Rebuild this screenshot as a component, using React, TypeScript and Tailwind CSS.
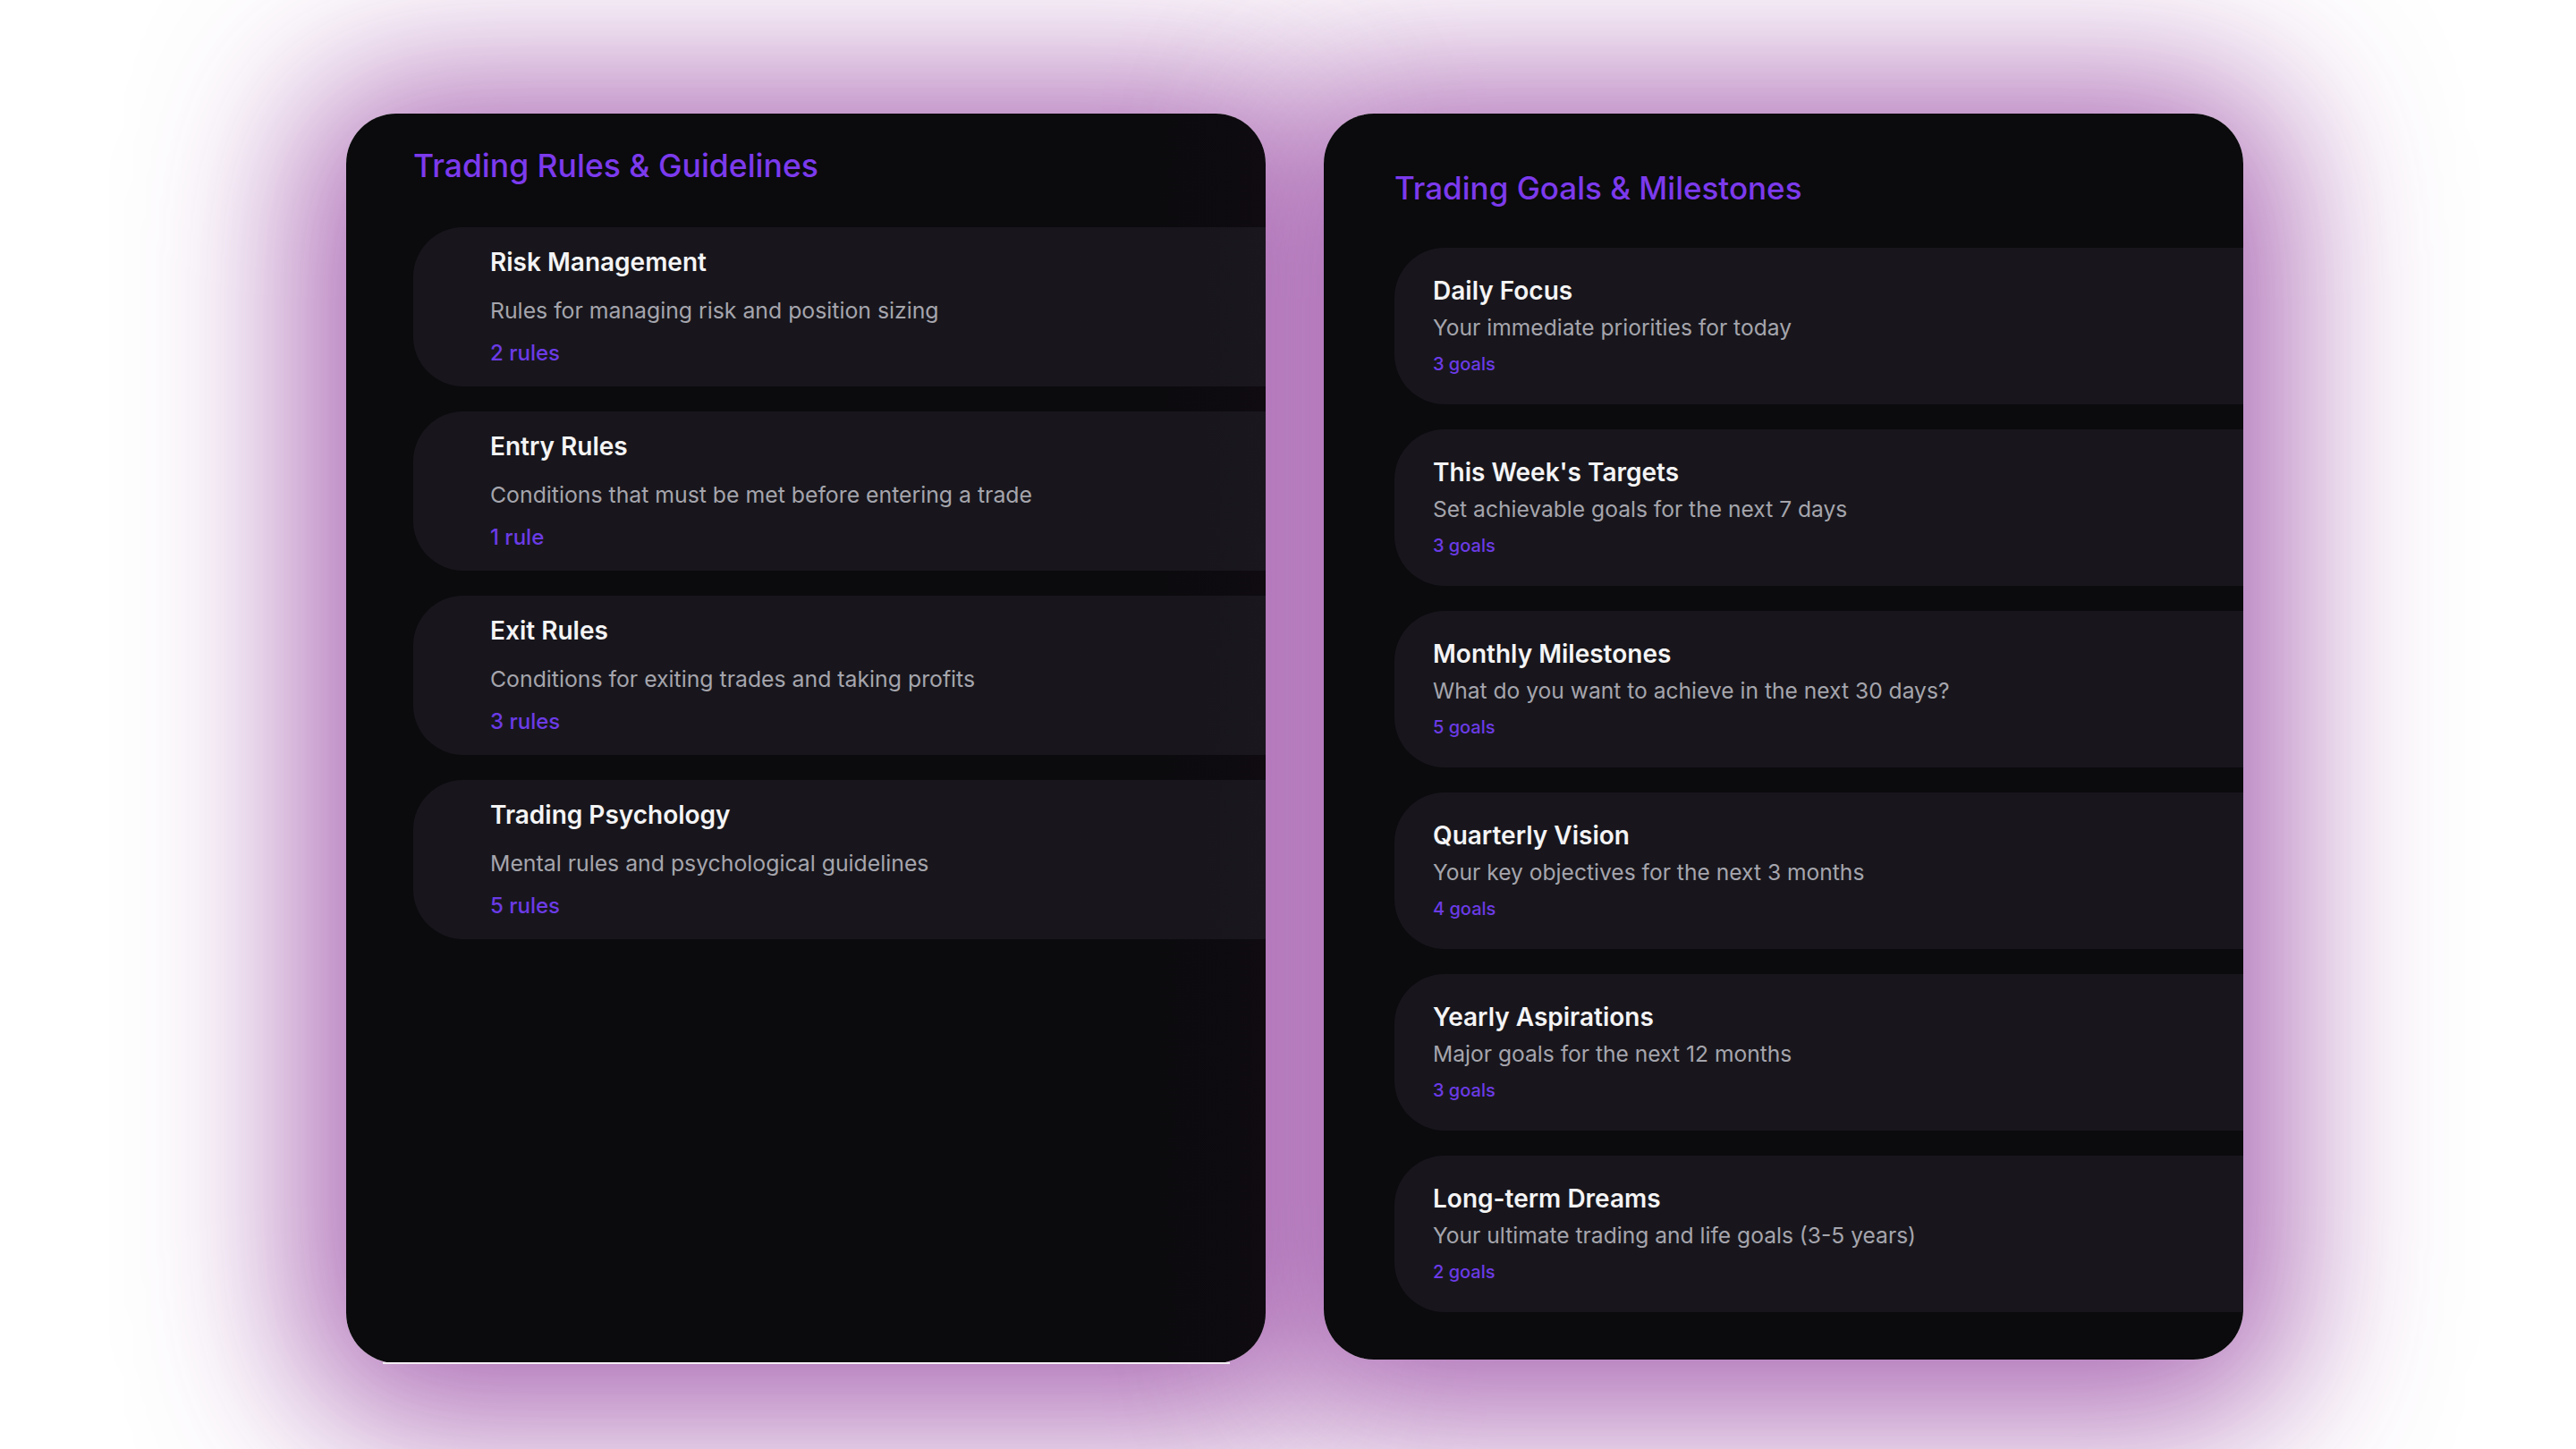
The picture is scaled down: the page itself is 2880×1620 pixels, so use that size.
import React from 'react';

type Group = { title: string; desc: string; count: string };

const RULES: Group[] = [
  { title: 'Risk Management', desc: 'Rules for managing risk and position sizing', count: '2 rules' },
  { title: 'Entry Rules', desc: 'Conditions that must be met before entering a trade', count: '1 rule' },
  { title: 'Exit Rules', desc: 'Conditions for exiting trades and taking profits', count: '3 rules' },
  { title: 'Trading Psychology', desc: 'Mental rules and psychological guidelines', count: '5 rules' },
];

const GOALS: Group[] = [
  { title: 'Daily Focus', desc: 'Your immediate priorities for today', count: '3 goals' },
  { title: "This Week's Targets", desc: 'Set achievable goals for the next 7 days', count: '3 goals' },
  { title: 'Monthly Milestones', desc: 'What do you want to achieve in the next 30 days?', count: '5 goals' },
  { title: 'Quarterly Vision', desc: 'Your key objectives for the next 3 months', count: '4 goals' },
  { title: 'Yearly Aspirations', desc: 'Major goals for the next 12 months', count: '3 goals' },
  { title: 'Long-term Dreams', desc: 'Your ultimate trading and life goals (3-5 years)', count: '2 goals' },
];

// glow sits on the wrapper so both panels paint above either halo
const GLOW = 'rounded-[56px] shadow-[0_16px_180px_50px_rgba(160,85,170,0.9)]';

const App: React.FC = () => {
  return (
    <div
      className="min-h-screen w-full bg-white overflow-hidden"
      style={{ fontFamily: 'Inter, "Noto Sans", sans-serif' }}
    >
      <div className="flex items-start gap-[65px] pl-[387px] pt-[127px]">
        {/* Rules panel */}
        <div className="flex flex-col items-center">
          <div className={GLOW}>
            <section className="relative z-10 w-[1028px] h-[1397px] rounded-[56px] overflow-hidden bg-linear-to-r from-[#0b0a0d] from-88% to-[#0f0b11] pl-[75px] pt-[37px]">
              <h2 className="text-[35.5px] leading-[44px] font-medium text-[#7c3aed]">Trading Rules &amp; Guidelines</h2>
              <div className="mt-[46px] flex flex-col gap-[28px]">
                {RULES.map((r) => (
                  <div
                    key={r.title}
                    className="w-[1040px] h-[178px] shrink-0 rounded-[56px] bg-linear-to-r from-[#18161c] from-85% to-[#1c1722] pl-[86px] pt-[21px]"
                  >
                    <h3 className="text-[28px] leading-[36px] font-semibold text-[#f4f4f5]">{r.title}</h3>
                    <p className="mt-[20px] text-[24.8px] leading-[32px] text-[#a5a5ad]">{r.desc}</p>
                    <p className="mt-[16px] text-[24px] leading-[32px] font-medium text-[#6b3be6]">{r.count}</p>
                  </div>
                ))}
              </div>
            </section>
          </div>
          <div className="relative z-10 -mt-[1px] h-[2px] w-[947px] bg-[#f3ecf3]" />
        </div>

        {/* Goals panel */}
        <div className={GLOW}>
          <section className="relative z-10 w-[1028px] h-[1393px] rounded-[56px] overflow-hidden bg-[#0b0a0d] pl-[79px] pt-[61px]">
            <h2 className="text-[35px] leading-[44px] font-medium text-[#7c3aed]">Trading Goals &amp; Milestones</h2>
            <div className="mt-[45px] flex flex-col gap-[28px]">
              {GOALS.map((g) => (
                <div
                  key={g.title}
                  className="w-[1040px] h-[175px] shrink-0 rounded-[56px] bg-[#18161c] pl-[43px] pt-[30px]"
                >
                  <h3 className="text-[28px] leading-[36px] font-semibold text-[#f4f4f5]">{g.title}</h3>
                  <p className="mt-[7px] text-[24.6px] leading-[32px] text-[#a5a5ad]">{g.desc}</p>
                  <p className="mt-[11px] text-[20px] leading-[28px] font-medium text-[#6b3be6]">{g.count}</p>
                </div>
              ))}
            </div>
          </section>
        </div>
      </div>
    </div>
  );
};

export default App;
